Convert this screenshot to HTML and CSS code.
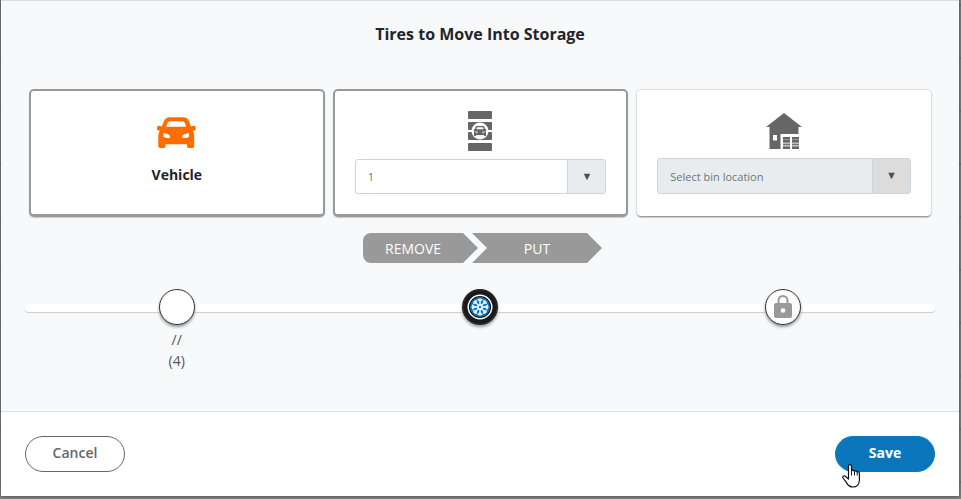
FILE: index.html
```html
<!DOCTYPE html>
<html lang="en">
<head>
    <meta charset="UTF-8">
    <meta name="viewport" content="width=device-width, initial-scale=1.0">
    <title>Tires to Move Into Storage</title>
    <link rel="stylesheet" href="styles.css">
</head>
<body>
    <form class="modal" id="moveForm">
        <div class="modal-content">
            <h1 class="title">Tires to Move Into Storage</h1>

            <div class="cards">
                <div class="card active">
                    <svg class="icon icon-car" viewBox="0 0 40 40">
                        <path fill="#ff6d00" fill-rule="evenodd" d="M13 6.300h13c3.300 0 5.300 1.700 6.300 4.500l1.700 4.700c.8-.6 1.700-.8 2.700-.8 1.300 0 2 .8 2 1.800v1c0 1.300-.7 2.200-2.200 2.200h-1c1.300 1.500 1.700 3.300 1.700 5.500V35c0 1.300-.7 2-2 2h-3.200c-1.300 0-2-.7-2-2v-1.700H8.500V35c0 1.300-.7 2-2 2H3.300c-1.300 0-2-.7-2-2v-9.800c0-2.200.5-4 1.700-5.500H2.200C.7 19.700 0 18.800 0 17.500v-1c0-1 .8-1.800 2-1.800s2 .2 2.800.8l1.900-4.700c1-2.800 3-4.500 6.300-4.500zM13.500 10.200c-1.700 0-2.600.7-3.200 2.300l-1.100 3.200h20l-1.200-3.200c-.6-1.600-1.500-2.300-3.200-2.300zM6.500 22.300v3.500c1 1.100 3 1.300 6.500 1.200v-2.200c-1.500-1.500-3.500-2.400-6.500-2.500zM32 22.300c-3 .1-5 1-6.700 2.500V27c3.500.1 5.700-.1 6.700-1.200z"/>
                    </svg>
                    <span class="card-name">Vehicle</span>
                </div>

                <div class="card active">
                    <svg class="icon" viewBox="0 0 40 40">
                        <g fill="#666">
                            <rect x="8" y="0" width="24" height="8" rx="1"/>
                            <rect x="8" y="11" width="24" height="8" rx="1"/>
                            <rect x="8" y="21" width="24" height="8" rx="1"/>
                            <rect x="8" y="32" width="24" height="8" rx="1"/>
                        </g>
                        <circle cx="20" cy="20" r="8.500" fill="#fff"/>
                        <path fill="#666" fill-rule="evenodd" d="M17.500 15h5c1 0 1.600.5 2 1.400l.6 1.600h1.100v1.200h-.6c.3.500.4 1 .4 1.600V25h-2v-1h-8v1h-2v-4.200c0-.6.100-1.100.4-1.600h-.6V18h1.100l.6-1.600c.4-.9 1-1.400 2-1.400zM17.700 16.200c-.5 0-.7.200-.9.700l-.5 1.300h7.400l-.5-1.300c-.2-.5-.4-.7-.9-.7zM15.500 20.500v1.300h2.200v-1zM24.500 20.500l-2.200.3v1h2.200z"/>
                    </svg>
                    <div class="picker">
                        <select name="shelf" id="shelf" aria-label="Shelf">
                            <option>1</option>
                            <option>2</option>
                        </select>
                        <label for="shelf" class="arrow">▼</label>
                    </div>
                </div>

                <div class="card">
                    <svg class="icon" viewBox="0 0 40 40">
                        <path fill="#666" fill-rule="evenodd" d="M20 3L38 17h-3.500v7H16.500v15H5.500V17H2zM9 25v5.500h4V25z"/>
                        <path stroke="#666" stroke-width="2" d="M19 28h7M28 28h7M19 31h7M28 31h7M19 38h7M28 38h7"/>
                        <path stroke="#777" stroke-width="2" d="M19 34.500h7M28 34.500h7"/>
                        <path stroke="#999" stroke-width="1" d="M19 29.500h7M28 29.500h7M19 32.500h7M28 32.500h7M19 36.500h7M28 36.500h7"/>
                    </svg>
                    <div class="picker disabled">
                        <select name="bin" id="bin" aria-label="Bin location" disabled>
                            <option>Select bin location</option>
                        </select>
                        <label for="bin" class="arrow">▼</label>
                    </div>
                </div>
            </div>

            <div class="steps">
                <span class="step step-remove">REMOVE</span>
                <span class="step step-put">PUT</span>
            </div>

            <div class="track">
                <div class="stop">
                    <span class="dot"></span>
                    <span class="stop-text">//</span>
                    <span class="stop-text">(4)</span>
                </div>
                <div class="stop">
                    <span class="dot tire">
                        <svg viewBox="0 0 36 36" width="36" height="36">
                            <circle cx="18" cy="18" r="18" fill="#1a1a1a"/>
                            <circle cx="18" cy="18" r="17" fill="none" stroke="#444" stroke-dasharray="1 1"/>
                            <circle cx="18" cy="18" r="11.800" fill="#1a1a1a" stroke="#fff" stroke-width="1.400"/>
                            <circle cx="18" cy="18" r="10" fill="#0a77bd"/>
                            <g fill="none" stroke="#fff" stroke-width="1.400">
                                <path id="arm" d="M18 16V9.500M15.800 10.300l2.200 2 2.200-2"/>
                                <use href="#arm" transform="rotate(45 18 18)"/>
                                <use href="#arm" transform="rotate(90 18 18)"/>
                                <use href="#arm" transform="rotate(135 18 18)"/>
                                <use href="#arm" transform="rotate(180 18 18)"/>
                                <use href="#arm" transform="rotate(225 18 18)"/>
                                <use href="#arm" transform="rotate(270 18 18)"/>
                                <use href="#arm" transform="rotate(315 18 18)"/>
                                <circle cx="18" cy="18" r="2"/>
                            </g>
                        </svg>
                    </span>
                </div>
                <div class="stop">
                    <span class="dot">
                        <svg viewBox="0 0 18 24" width="18" height="24">
                            <path d="M4.500 10V5.500a4.500 4.500 0 0 1 9 0V10" fill="none" stroke="#999" stroke-width="2"/>
                            <rect x="0" y="8" width="18" height="15" rx="2" fill="#999"/>
                            <circle cx="9" cy="15.500" r="2.300" fill="#fff"/>
                        </svg>
                    </span>
                </div>
            </div>
        </div>

        <div class="modal-footer">
            <button type="button" class="btn btn-cancel">Cancel</button>
            <div class="save-box">
                <button type="submit" class="btn btn-save">Save</button>
                <svg class="pointer" viewBox="0 0 18 24" width="18" height="24">
                    <path fill="#fff" stroke="#111" stroke-width="1.200" stroke-linejoin="round" d="M6.500 15V2.200c0-2 3-2 3 0V7c.3-1.200 2.800-1.200 3 .6.400-1.100 2.500-.9 2.700.7.500-.8 2.200-.5 2.200 1V16c0 4-2.400 7-6.400 7-4.600 0-5.600-2.600-7.200-5.400L1 14c-.9-1.500.9-2.700 2.300-1.700z"/>
                    <path fill="none" stroke="#111" d="M9.500 7v4.500M12.500 7.500v4M15.200 8.500v3"/>
                </svg>
            </div>
        </div>
    </form>

    <script type="text/javascript">
        document.getElementById("moveForm").addEventListener("submit", function(e) {
            e.preventDefault();
        });
    </script>
</body>
</html>
```

FILE: styles.css
```css
* {
    box-sizing: border-box;
}

body {
    margin: 0;
    min-height: 100vh;
    padding: 0 2px 3px 1px;
    display: flex;
    background: repeating-linear-gradient(#808080 0, #808080 4px, #6e6e6e 4px, #6e6e6e 6px, #808080 6px, #808080 53px);
    font-family: "Open Sans", "Noto Sans", sans-serif;
    font-size: 14px;
    color: #555;
}

.modal {
    flex: 1;
    display: flex;
    flex-direction: column;
    background-color: #f8f9fb;
    border-top: 1px solid #dcdcdc;
    box-shadow: 0 0 3px #444;
}

.modal-content {
    flex: 1;
    padding: 20px 24px;
}

.title {
    margin: 0 0 42px;
    font-size: 16px;
    line-height: 26px;
    font-weight: 700;
    text-align: center;
    color: #212529;
}

.cards {
    display: grid;
    grid-template-columns: repeat(3, 1fr);
    gap: 8px;
    padding: 0 3px 0 4px;
}

.card {
    height: 128px;
    padding: 20px;
    display: flex;
    flex-direction: column;
    align-items: center;
    background-color: #fff;
    border: 1px solid #dcdde0;
    border-bottom-color: #999;
    border-radius: 5px;
    box-shadow: 0 1px 1px #ccc;
}

.card.active {
    border: 2px solid #999;
    border-bottom-width: 3px;
}

.icon {
    width: 40px;
    height: 40px;
    flex: none;
    margin-bottom: 8px;
}

.card-name {
    padding-top: 5px;
    line-height: 21px;
    font-weight: 700;
    color: #212529;
}

.picker {
    align-self: stretch;
    height: 36px;
    display: flex;
    overflow: hidden;
    background-color: #fff;
    border: 1px solid #ced4da;
    border-radius: 3px;
}

.picker select {
    flex: 1;
    min-width: 0;
    padding: 0 12px;
    appearance: none;
    border: none;
    background: none;
    font-family: inherit;
    font-size: 11px;
    color: #6c757d;
    opacity: 1;
}

.arrow {
    width: 38px;
    border-left: 1px solid #ced4da;
    background-color: #e9ecef;
    color: #495057;
    font-size: 11px;
    line-height: 32px;
    text-align: center;
}

.picker.disabled {
    background-color: #e9ecef;
}

.disabled .arrow {
    background-color: #dcdcdc;
}

.steps {
    display: flex;
    justify-content: center;
    margin: 16px 0 26px;
    padding-left: 5px;
}

.step {
    height: 30px;
    line-height: 31px;
    background-color: #999;
    color: #fff;
    text-align: center;
}

.step-remove {
    width: 115px;
    padding-right: 15px;
    border-radius: 8px 0 0 8px;
    clip-path: polygon(0 0, 100px 0, 100% 50%, 100px 100%, 0 100%);
}

.step-put {
    width: 130px;
    margin-left: -6px;
    clip-path: polygon(0 0, 115px 0, 100% 50%, 115px 100%, 0 100%, 15px 50%);
}

/* white rail behind the three dots */
.track {
    display: grid;
    grid-template-columns: repeat(3, 1fr);
    position: relative;
}

.track::before {
    content: "";
    position: absolute;
    top: 15px;
    left: 0;
    right: 0;
    height: 8px;
    border-radius: 4px;
    background-color: #fff;
    box-shadow: 0 1px 1px #ccc;
}

.stop {
    position: relative;
    display: flex;
    flex-direction: column;
    align-items: center;
}

.dot {
    width: 36px;
    height: 36px;
    margin-bottom: 4px;
    display: flex;
    align-items: center;
    justify-content: center;
    background-color: #fff;
    border: 1px solid #333;
    border-radius: 50%;
    box-shadow: 0 2px 3px #999;
}

.dot.tire {
    border: none;
}

.stop-text {
    line-height: 21px;
}

.modal-footer {
    display: flex;
    justify-content: space-between;
    padding: 24px;
    background-color: #fff;
    border-top: 1px solid #dee2e6;
}

.btn {
    width: 100px;
    height: 36px;
    padding: 0 0 4px;
    border: 1px solid #666;
    border-radius: 18px;
    background-color: #fff;
    font-family: inherit;
    font-size: 14px;
    font-weight: 600;
    color: #666;
    cursor: pointer;
}

.btn-save {
    border-color: #0a77bd;
    background-color: #0a77bd;
    font-weight: 700;
    color: #fff;
}

.save-box {
    position: relative;
}

.pointer {
    position: absolute;
    left: 7px;
    top: 28px;
    pointer-events: none;
}
```
